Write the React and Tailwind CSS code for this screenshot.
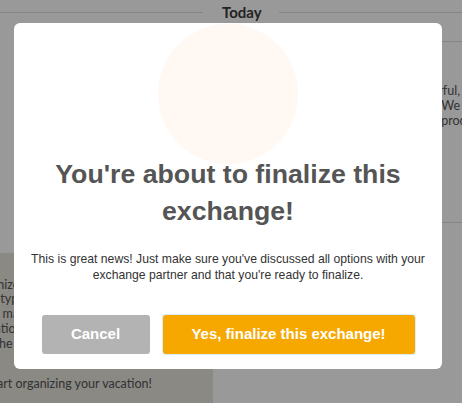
export default function App() {
  return (
    <div className="relative h-[403px] w-[462px] overflow-hidden bg-white font-['Lato',sans-serif] text-[#3a3a3a]">
      {/* underlying page */}
      <div className="flex h-[25px] items-center">
        <div className="h-px w-[203px] bg-[#e0e0e0]" />
        <div className="ml-[19px] mr-[17px] text-[15px] font-bold leading-none text-[#3a3a3a]">Today</div>
        <div className="h-px flex-1 bg-[#e0e0e0]" />
      </div>
      <div className="flex">
        <div className="w-[213px] shrink-0 pt-[228px]">
          <div className="h-[150px] bg-[#e6e4dc] pt-[24.6px] text-[12.5px] leading-[14.75px] text-[#555]">
            <div className="-ml-[33px] whitespace-nowrap">
              <div>Orga nize your</div>
              <div>every type of</div>
              <div>time - make it</div>
              <div>a vacation</div>
              <div>with the best</div>
            </div>
            <div className="-ml-[14px] mt-[26px] whitespace-nowrap">Start organizing your vacation!</div>
          </div>
        </div>
        <div className="flex-1">
          <div className="mt-[16px] border-t border-[#e0e0e0] pt-[41px] text-right text-[12.5px] leading-[15px] text-[#555]">
            <div className="mr-[2px] whitespace-nowrap">Your exchange looks wonderful,</div>
            <div className="mr-[2px] whitespace-nowrap">and mutually beneficial. We</div>
            <div className="-mr-[20px] whitespace-nowrap">love reciprocity.</div>
          </div>
          <div className="mt-[94px] border-t border-[#e0e0e0]" />
        </div>
      </div>

      {/* overlay + modal */}
      <div className="absolute inset-0 bg-black/40">
        <div className="ml-[14px] mt-[23px] flex w-[428px] flex-col items-center rounded-md bg-white px-[14px] pb-[15px] font-['Liberation_Sans',Arial,sans-serif]">
          <div className="mt-[1px] h-[140px] w-[140px] rounded-full bg-[#fff8f3]" />
          <h1 className="-mt-[8px] text-center text-[26.7px] font-bold leading-[37px] text-[#555]">
            You're about to finalize this exchange!
          </h1>
          <p className="mt-[20.5px] text-center text-[12.2px] leading-[16px] text-[#333]">
            This is great news! Just make sure you've discussed all options with your exchange partner and that you're ready to finalize.
          </p>
          <div className="mt-[32px] flex gap-[13px]">
            <button className="h-[39px] w-[108px] rounded-[3px] bg-[#b3b3b3] text-[15px] font-bold text-white">
              Cancel
            </button>
            <button className="h-[39px] w-[252px] rounded-[3px] bg-[#f6a800] text-[15px] font-bold text-white ring-1 ring-[#dcedfa]">
              Yes, finalize this exchange!
            </button>
          </div>
        </div>
      </div>
    </div>
  );
}
